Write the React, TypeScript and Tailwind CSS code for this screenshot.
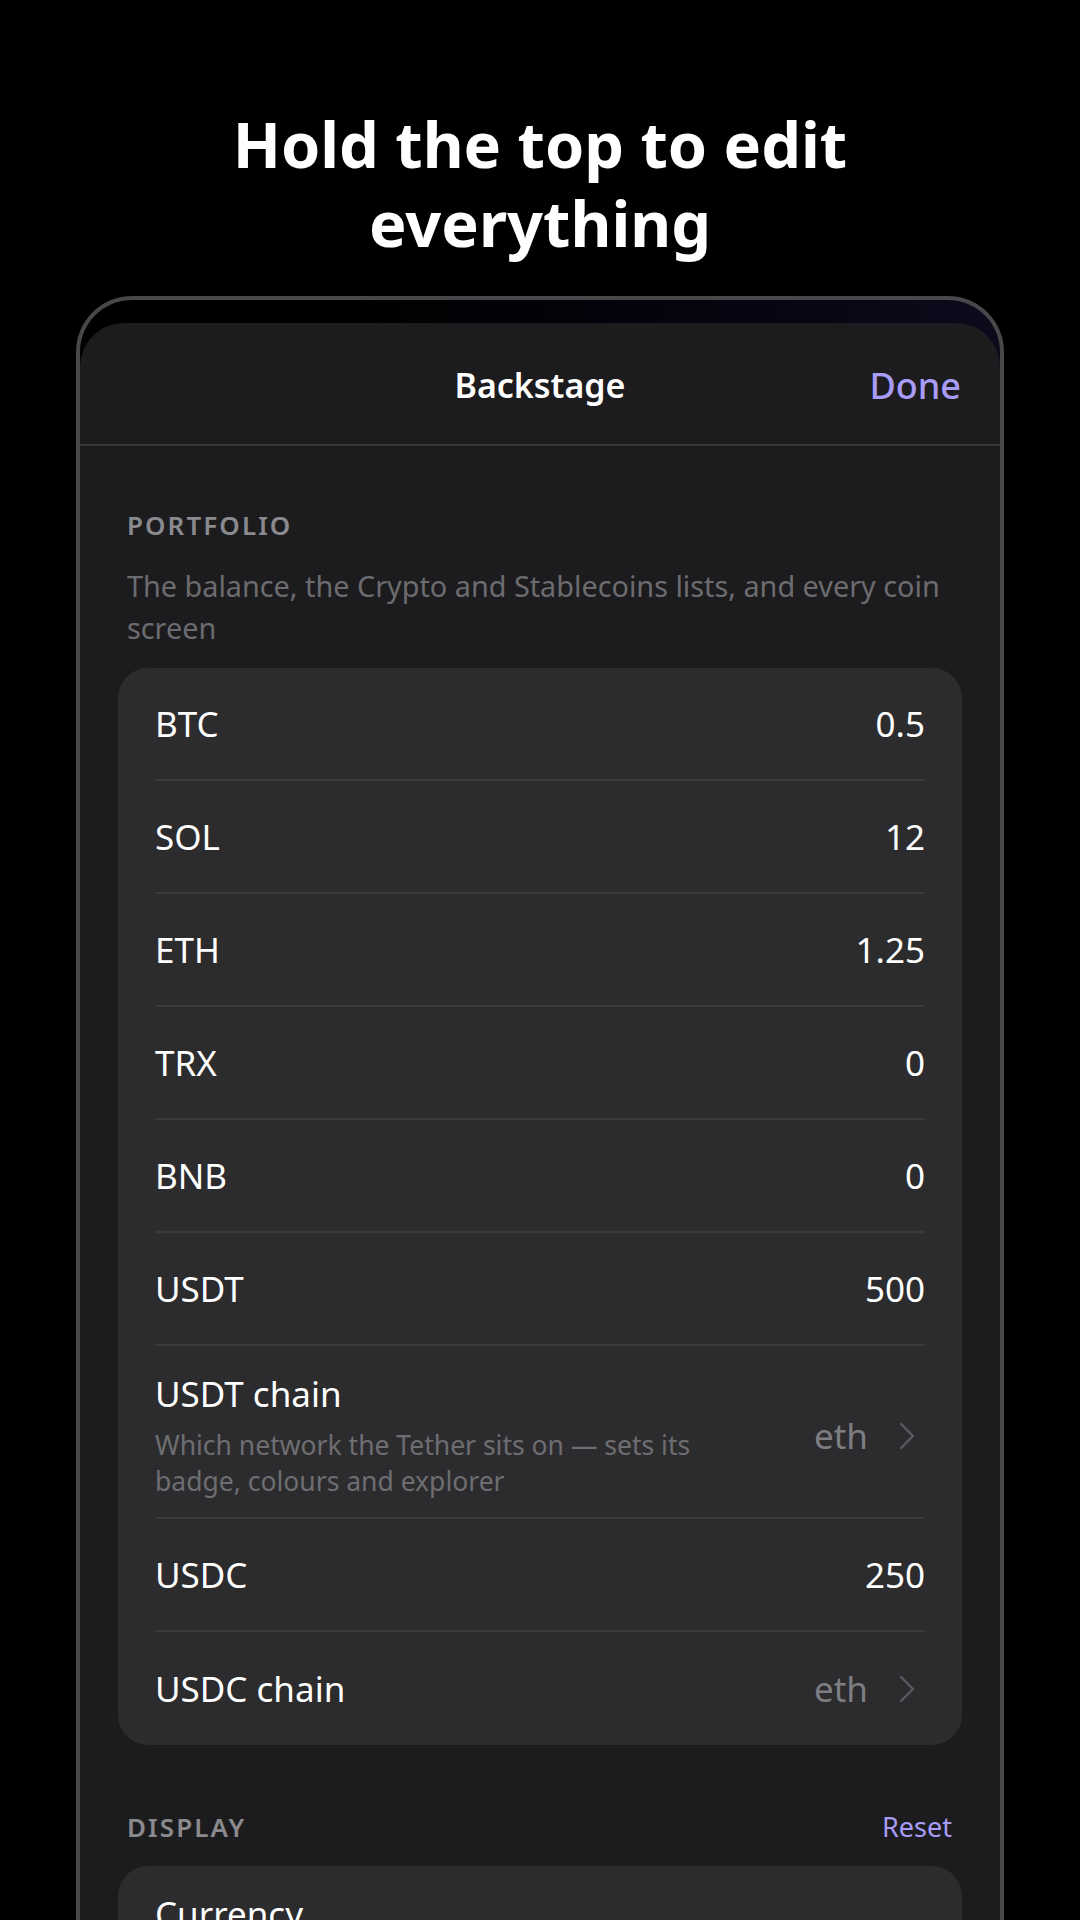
import { ChevronRight } from "lucide-react";

type Row = {
  label: string;
  value: string;
  hint?: string;
  picker?: boolean;
};

const portfolio: Row[] = [
  { label: "BTC", value: "0.5" },
  { label: "SOL", value: "12" },
  { label: "ETH", value: "1.25" },
  { label: "TRX", value: "0" },
  { label: "BNB", value: "0" },
  { label: "USDT", value: "500" },
  {
    label: "USDT chain",
    value: "eth",
    hint: "Which network the Tether sits on — sets its badge, colours and explorer",
    picker: true,
  },
  { label: "USDC", value: "250" },
  { label: "USDC chain", value: "eth", picker: true },
];

const display: Row[] = [
  {
    label: "Currency",
    value: "USD",
    hint: "What the balance and every price is shown in — sets the symbol and rounding",
    picker: true,
  },
  { label: "Theme", value: "dark", picker: true },
];

const SettingRow = ({ row, last }: { row: Row; last: boolean }) => (
  <div
    className={`flex items-center justify-between gap-6 ${row.hint ? "pt-[26px] pb-[18px]" : "h-[113px]"} ${last ? "" : "border-b-2 border-[#3a3a3c]"}`}
  >
    <div className="flex flex-col">
      <span className="text-[35px] leading-[44px] text-white">{row.label}</span>
      {row.hint && (
        <span className="mt-[11px] max-w-[600px] text-[26.5px] leading-[36px] text-[#6e6e72]">
          {row.hint}
        </span>
      )}
    </div>
    {row.picker ? (
      <div className="flex items-center gap-[15px] mr-[-6px]">
        <span className="text-[35px] leading-[44px] text-[#7e7e82]">{row.value}</span>
        <ChevronRight className="size-[48px] text-[#5c5c60]" strokeWidth={1.1} />
      </div>
    ) : (
      <span className="text-[35px] leading-[44px] text-white">{row.value}</span>
    )}
  </div>
);

const Card = ({ rows }: { rows: Row[] }) => (
  <div className="rounded-[30px] bg-[#2c2c2e] px-[37px]">
    {rows.map((row, i) => (
      <SettingRow key={row.label} row={row} last={i === rows.length - 1} />
    ))}
  </div>
);

export default function App() {
  return (
    <div className="w-[1080px] h-[1920px] overflow-hidden bg-black font-['Noto_Sans',sans-serif]">
      <h1 className="mx-auto max-w-[780px] pt-[104px] text-center text-[63px] leading-[79px] font-bold text-white">
        Hold the top to edit everything
      </h1>

      <div className="mx-[76px] mt-[34px] h-[1700px] rounded-t-[56px] border-4 border-b-0 border-[#48484a] bg-gradient-to-r from-black via-[#030208] to-[#0e0a1c]">
        <div className="mt-[23px] h-full rounded-t-[44px] bg-[#1c1c1e]">
          <div className="grid h-[123px] grid-cols-[1fr_auto_1fr] items-center border-b-2 border-[#38383a] px-[39px] pt-[4px]">
            <span />
            <span className="text-[34px] font-semibold text-white">Backstage</span>
            <button className="justify-self-end text-[36px] font-medium text-[#a89cf7]">Done</button>
          </div>

          <div className="px-[38px]">
            <div className="px-[9px] pt-[61px]">
              <div className="text-[26px] leading-[36px] font-semibold tracking-[0.08em] text-[#8a8a8e]">
                PORTFOLIO
              </div>
              <p className="mt-[22px] text-[28.8px] leading-[42px] text-[#6c6c70]">
                The balance, the Crypto and Stablecoins lists, and every coin screen
              </p>
            </div>
            <div className="mt-[19px]">
              <Card rows={portfolio} />
            </div>

            <div className="mt-[64px] flex items-center justify-between px-[9px]">
              <span className="text-[26px] leading-[36px] font-semibold tracking-[0.08em] text-[#8a8a8e]">
                DISPLAY
              </span>
              <button className="pr-[1px] text-[27px] leading-[36px] text-[#a89cf7]">Reset</button>
            </div>
            <div className="mt-[21px]">
              <Card rows={display} />
            </div>
          </div>
        </div>
      </div>
    </div>
  );
}
